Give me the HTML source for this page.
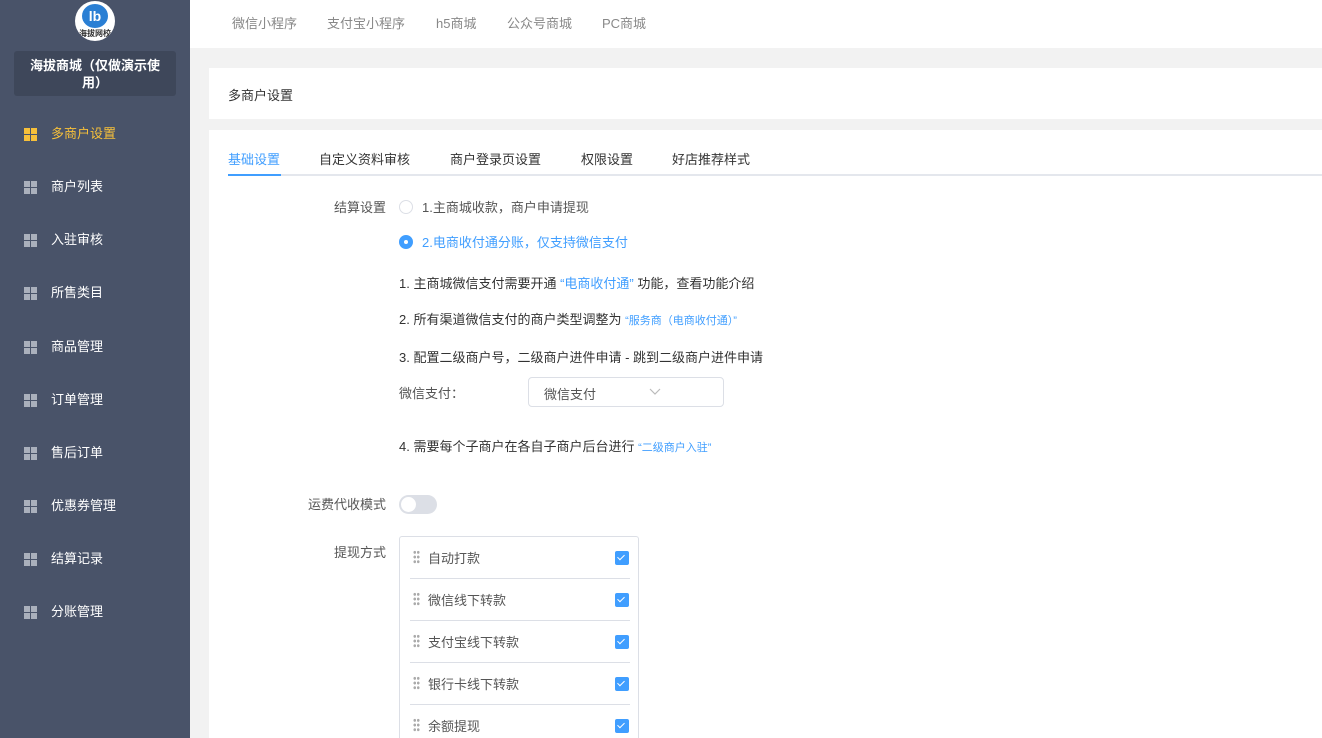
<!DOCTYPE html><html><head><meta charset="utf-8"><style>
*{margin:0;padding:0;box-sizing:border-box}
html,body{width:1322px;height:738px;overflow:hidden}
body{background:#f2f2f2;font-family:"Liberation Sans","Noto Sans CJK SC",sans-serif;font-size:13px;color:#333;position:relative}
.sb{position:absolute;left:0;top:0;width:190px;height:738px;background:#495369}
.logo{position:absolute;left:75px;top:1px;width:40px;height:40px;border-radius:50%;background:#fff;overflow:hidden}
.logo .b{position:absolute;left:7px;top:3px;width:26px;height:24px;border-radius:50%;background:#2a7fd4;color:#fff;font-size:14px;font-weight:bold;text-align:center;line-height:24px}
.logo .t{position:absolute;left:0;top:27px;width:40px;font-size:8px;text-align:center;color:#333;font-weight:bold}
.name{position:absolute;left:14px;top:51px;width:162px;height:45px;background:#3e475a;border-radius:3px;color:#fff;font-weight:bold;font-size:13px;text-align:center;line-height:17px;padding-top:6px}
.mi{position:absolute;left:0;width:190px;height:20px;color:#fff;font-size:13px;line-height:20px}
.mi i{position:absolute;left:24px;top:4px;width:13px;height:13px;display:grid;grid-template-columns:6px 6px;gap:1px}
.mi i b{background:#aab0bc}
.mi span{position:absolute;left:51px}
.mi.a{color:#f7c03a}.mi.a i b{background:#f7c03a}
.top{position:absolute;left:190px;top:0;right:0;height:48px;background:#fff}
.top span{position:absolute;top:13px;color:#888;font-size:13px}
.hd{position:absolute;left:209px;top:68px;right:0;height:51px;background:#fff}
.hd span{position:absolute;left:19px;top:17px;font-size:13px}
.ct{position:absolute;left:209px;top:130px;right:0;height:608px;background:#fff;overflow:hidden}
.tabs{position:absolute;left:19px;top:0;right:0;height:46px;border-bottom:2px solid #e4e7ed}
.tabs span{position:absolute;top:19px;font-size:13px;color:#333}
.tabs .on{color:#409eff}
.tabs .ul{position:absolute;left:0;top:44px;width:53px;height:2px;background:#409eff}
.t{position:absolute;white-space:nowrap}
.lb{color:#555;font-size:13px}
.bl{color:#409eff}
.rd{position:absolute;width:14px;height:14px;border-radius:50%;border:1px solid #dcdfe6;background:#fff}
.rd.on{background:#409eff;border-color:#409eff}
.rd.on:after{content:"";position:absolute;left:4px;top:4px;width:4px;height:4px;border-radius:50%;background:#fff}
.sel{position:absolute;left:319px;top:247px;width:196px;height:30px;border:1px solid #dcdfe6;border-radius:4px}
.sel span{position:absolute;left:15px;top:6px;color:#555}
.sel svg{position:absolute;left:120px;top:10px}
.sw{position:absolute;left:190px;top:365px;width:38px;height:19px;border-radius:10px;background:#dcdfe6}
.sw:after{content:"";position:absolute;left:2px;top:2px;width:15px;height:15px;border-radius:50%;background:#fff}
.box{position:absolute;left:190px;top:406px;width:240px;height:202px;border:1px solid #dcdfe6;border-bottom:0;border-radius:3px 3px 0 0;overflow:hidden}
.row{position:absolute;left:10px;width:220px;height:42px;border-bottom:1px solid #dcdfe6}
.row .d{position:absolute;left:3px;top:13px;width:7px;height:14px;background:radial-gradient(circle,#aaa 1.3px,transparent 1.5px) 0 0/3.5px 4.7px}
.row span{position:absolute;left:18px;top:11px;color:#555}
.row .c{position:absolute;left:205px;top:14px;width:14px;height:14px;background:#409eff;border-radius:2px}
.row .c:after{content:"";position:absolute;left:4px;top:2px;width:3px;height:6px;border:solid #fff;border-width:0 1.5px 1.5px 0;transform:rotate(45deg)}
</style></head><body>
<div class="sb">
<div class="logo"><div class="b">lb</div><div class="t">海拔网校</div></div>
<div class="name">海拔商城（仅做演示使<br>用）</div>
<div class="mi a" style="top:124px"><i><b></b><b></b><b></b><b></b></i><span>多商户设置</span></div>
<div class="mi" style="top:177px"><i><b></b><b></b><b></b><b></b></i><span>商户列表</span></div>
<div class="mi" style="top:230px"><i><b></b><b></b><b></b><b></b></i><span>入驻审核</span></div>
<div class="mi" style="top:283px"><i><b></b><b></b><b></b><b></b></i><span>所售类目</span></div>
<div class="mi" style="top:337px"><i><b></b><b></b><b></b><b></b></i><span>商品管理</span></div>
<div class="mi" style="top:390px"><i><b></b><b></b><b></b><b></b></i><span>订单管理</span></div>
<div class="mi" style="top:443px"><i><b></b><b></b><b></b><b></b></i><span>售后订单</span></div>
<div class="mi" style="top:496px"><i><b></b><b></b><b></b><b></b></i><span>优惠券管理</span></div>
<div class="mi" style="top:549px"><i><b></b><b></b><b></b><b></b></i><span>结算记录</span></div>
<div class="mi" style="top:602px"><i><b></b><b></b><b></b><b></b></i><span>分账管理</span></div>
</div>
<div class="top"><span style="left:42px">微信小程序</span><span style="left:137px">支付宝小程序</span><span style="left:246px">h5商城</span><span style="left:317px">公众号商城</span><span style="left:412px">PC商城</span></div>
<div class="hd"><span>多商户设置</span></div>
<div class="ct">
<div class="tabs"><span class="on" style="left:0">基础设置</span><span style="left:91px">自定义资料审核</span><span style="left:222px">商户登录页设置</span><span style="left:353px">权限设置</span><span style="left:444px">好店推荐样式</span><div class="ul"></div></div>
<div class="t lb" style="left:125px;top:67px">结算设置</div>
<div class="rd" style="left:190px;top:70px"></div><div class="t" style="left:213px;top:67px;color:#555">1.主商城收款，商户申请提现</div>
<div class="rd on" style="left:190px;top:105px"></div><div class="t bl" style="left:213px;top:102px">2.电商收付通分账，仅支持微信支付</div>
<div class="t" style="left:190px;top:143px">1. 主商城微信支付需要开通 <span class="bl">“电商收付通”</span> 功能，查看功能介绍</div>
<div class="t" style="left:190px;top:179px">2. 所有渠道微信支付的商户类型调整为 <span class="bl" style="font-size:11px">“服务商（电商收付通）”</span></div>
<div class="t" style="left:190px;top:217px">3. 配置二级商户号，二级商户进件申请 - 跳到二级商户进件申请</div>
<div class="t" style="left:190px;top:253px;color:#555">微信支付：</div>
<div class="sel"><span>微信支付</span><svg width="12" height="8"><path d="M1 1l5 5 5-5" fill="none" stroke="#bbb" stroke-width="1.2"/></svg></div>
<div class="t" style="left:190px;top:306px">4. 需要每个子商户在各自子商户后台进行 <span class="bl" style="font-size:11px">“二级商户入驻”</span></div>
<div class="t lb" style="left:99px;top:364px">运费代收模式</div>
<div class="sw"></div>
<div class="t lb" style="left:125px;top:412px">提现方式</div>
<div class="box">
<div class="row" style="top:0"><i class="d"></i><span>自动打款</span><i class="c"></i></div>
<div class="row" style="top:42px"><i class="d"></i><span>微信线下转款</span><i class="c"></i></div>
<div class="row" style="top:84px"><i class="d"></i><span>支付宝线下转款</span><i class="c"></i></div>
<div class="row" style="top:126px"><i class="d"></i><span>银行卡线下转款</span><i class="c"></i></div>
<div class="row" style="top:168px"><i class="d"></i><span>余额提现</span><i class="c"></i></div>
</div>
</div>
</body></html>
